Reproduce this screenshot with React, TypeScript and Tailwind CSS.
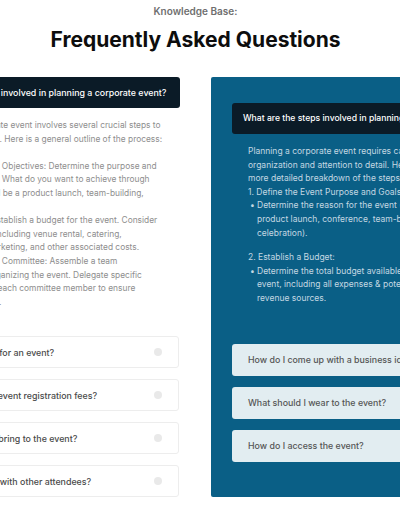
const leftBody = [
  "Planning a corporate event involves several crucial steps to",
  "ensure its success. Here is a general outline of the process:",
  "",
  "1. Define the Event Objectives: Determine the purpose and",
  "goals of the event. What do you want to achieve through",
  "this event? It could be a product launch, team-building,",
  "or a gala.",
  "2. Set a Budget: Establish a budget for the event. Consider",
  "all the expenses, including venue rental, catering,",
  "entertainment, marketing, and other associated costs.",
  "3. Form a Planning Committee: Assemble a team",
  "responsible for organizing the event. Delegate specific",
  "responsibilities to each committee member to ensure",
  "efficient execution.",
];

const leftQuestions = [
  "How do I register for an event?",
  "Are there hidden event registration fees?",
  "What should you bring to the event?",
  "How can I mingle with other attendees?",
];

const rightQuestions = [
  "How do I come up with a business idea?",
  "What should I wear to the event?",
  "How do I access the event?",
];

function Bullet({ lines }: { lines: string[] }) {
  return (
    <div className="flex pl-[2px]">
      <span className="w-[7px] shrink-0">•</span>
      <div>
        {lines.map((l) => (
          <div key={l}>{l}</div>
        ))}
      </div>
    </div>
  );
}

export default function App() {
  return (
    <div
      className="w-[400px] h-[516px] overflow-hidden bg-white"
      style={{ fontFamily: "Inter, 'Noto Sans', sans-serif" }}
    >
      {/* Heading */}
      <div className="w-[391px] pt-[4px] text-center">
        <p className="text-[10px] leading-[14px] font-semibold text-[#6f6f6f]">
          Knowledge Base:
        </p>
        <h1 className="mt-[8px] text-[21px] leading-[28px] font-bold text-[#0d0d0d]">
          Frequently Asked Questions
        </h1>
      </div>

      <div className="mt-[23px] ml-[-92px] flex gap-[31px] w-[620px]">
        {/* Left column */}
        <div className="w-[272px] shrink-0">
          <div className="h-[31px] rounded-[3px] bg-[#0b1b27] px-[11px] flex items-center text-[8.85px] font-medium text-white whitespace-nowrap">
            What are the steps involved in planning a corporate event?
          </div>
          <div className="mt-[11px] pl-[18px] text-[8.4px] leading-[13.6px] text-[#8e8e8e] whitespace-nowrap">
            {leftBody.map((line, i) => (
              <div key={i} className="h-[13.6px]">
                {line}
              </div>
            ))}
          </div>
          <div className="mt-[27px] flex flex-col gap-[11px]">
            {leftQuestions.map((q) => (
              <div
                key={q}
                className="h-[32px] w-[271px] rounded-[3px] border border-[#ededed] pl-[16px] pr-[16px] flex items-center justify-between text-[8.85px] font-medium text-[#4a4a4a] whitespace-nowrap"
              >
                <span>{q}</span>
                <span className="w-[8px] h-[8px] rounded-full bg-[#e9e9e9]" />
              </div>
            ))}
          </div>
        </div>

        {/* Right panel */}
        <div className="w-[314px] shrink-0 rounded-[2px] bg-[#0a5f86] pt-[26px] px-[21px] pb-[32px]">
          <div className="h-[31px] rounded-[3px] bg-[#0b1b27] px-[11px] flex items-center text-[8.6px] font-medium text-white whitespace-nowrap">
            What are the steps involved in planning a corporate event?
          </div>
          <div className="mt-[11px] px-[16px] text-[8.5px] leading-[13.6px] text-[#c3d7e2] whitespace-nowrap">
            <div>Planning a corporate event requires careful</div>
            <div>organization and attention to detail. Here is a</div>
            <div>more detailed breakdown of the steps involved:</div>
            <div>1. Define the Event Purpose and Goals:</div>
            <Bullet
              lines={[
                "Determine the reason for the event (e.g.,",
                "product launch, conference, team-building,",
                "celebration).",
              ]}
            />
            <div className="mt-[11px]">2. Establish a Budget:</div>
            <Bullet
              lines={[
                "Determine the total budget available for the",
                "event, including all expenses & potential",
                "revenue sources.",
              ]}
            />
          </div>
          <div className="mt-[38px] flex flex-col gap-[11px]">
            {rightQuestions.map((q) => (
              <div
                key={q}
                className="h-[32px] rounded-[3px] bg-[#e2edf1] px-[16px] flex items-center text-[8.85px] font-medium text-[#555] whitespace-nowrap"
              >
                {q}
              </div>
            ))}
          </div>
        </div>
      </div>
    </div>
  );
}
